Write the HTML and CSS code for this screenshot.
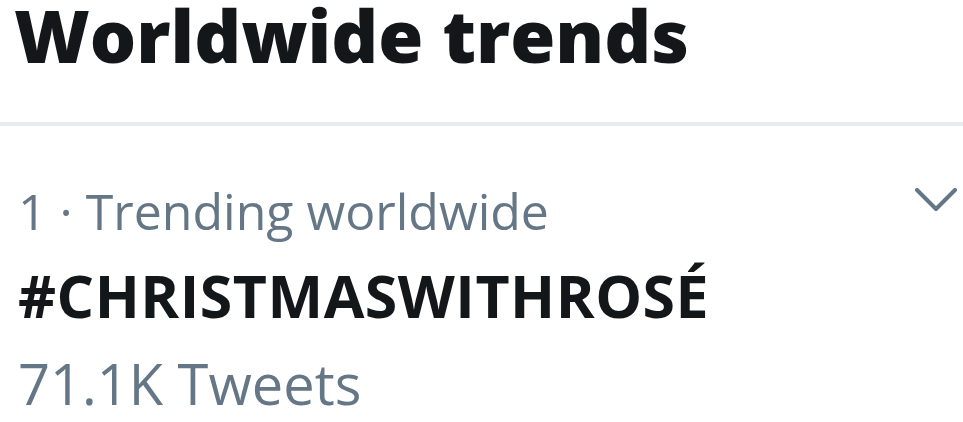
FILE: index.html
```html
<!DOCTYPE html>
<html>
<head>
<meta charset="utf-8">
<link rel="stylesheet" href="styles.css">
</head>
<body>
<div class="panel">
  <header class="head">
    <h1 class="title">Worldwide trends</h1>
  </header>
  <div class="trend">
    <div class="trend-body">
      <div class="meta">1 · Trending worldwide</div>
      <div class="tag">#CHRISTMASWITHROSÉ</div>
      <div class="count">71.1K Tweets</div>
    </div>
    <svg class="chev" width="42" height="24" viewBox="0 0 42 24">
      <path d="M2 2 L21 21 L40 2" fill="none" stroke="#657786" stroke-width="4" stroke-linecap="round" stroke-linejoin="round"/>
    </svg>
  </div>
</div>
</body>
</html>
```
FILE: styles.css
```css
html, body {
  margin: 0;
  padding: 0;
  background: #ffffff;
}
.panel {
  width: 963px;
  font-family: "Open Sans", "Noto Sans", sans-serif;
}
.head {
  padding: 0 0 0 14px;
  height: 122px;
  border-bottom: 4px solid #e6ecf0;
}
.title {
  margin: 0;
  font-size: 73px;
  font-weight: 800;
  line-height: 70px;
  color: #14171a;
}
.trend {
  display: flex;
  justify-content: space-between;
  align-items: flex-start;
  padding: 55px 6px 0 18px;
}
.meta {
  font-size: 50px;
  line-height: 60px;
  color: #657786;
}
.tag {
  margin-top: 14px;
  font-size: 59px;
  font-weight: 700;
  line-height: 80px;
  letter-spacing: 0.5px;
  color: #14171a;
}
.count {
  margin-top: 13px;
  font-size: 56px;
  line-height: 70px;
  color: #657786;
}
.chev {
  margin-top: 7px;
}
```
